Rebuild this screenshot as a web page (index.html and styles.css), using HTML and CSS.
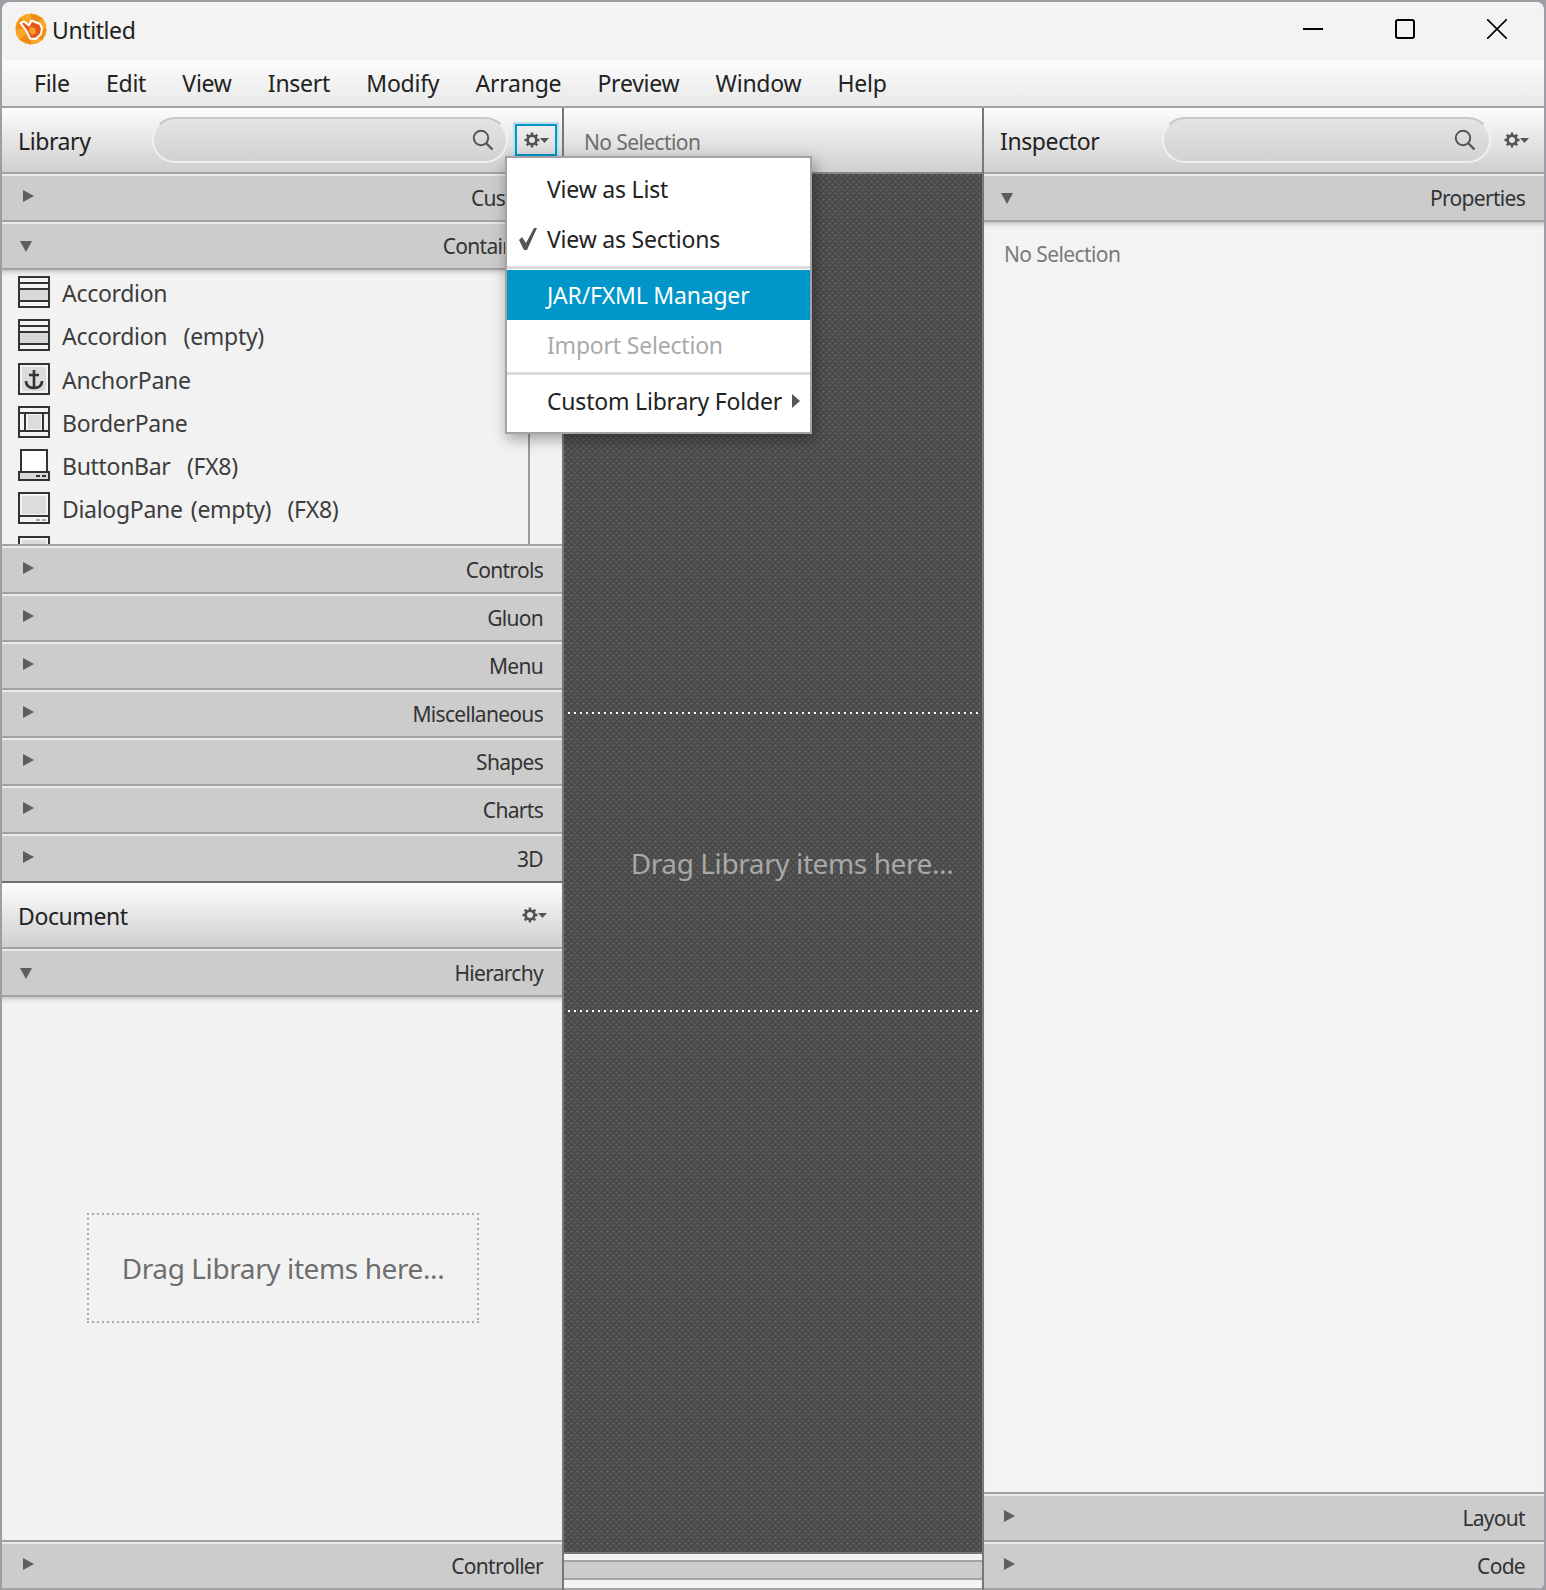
FILE: index.html
```html
<!DOCTYPE html>
<html lang="en">
<head>
<meta charset="utf-8">
<title>Untitled</title>
<link rel="stylesheet" href="styles.css">
</head>
<body>
<div class="window">
  <header class="titlebar">
    <svg class="logo" viewBox="0 0 32 32" aria-hidden="true">
      <path fill="#f9a825" d="M10 1.500 16 .5l6 1 5.500 3.500 3.500 6 .5 5-.5 5.500-3.500 5.500-5.500 3.500-6 1-6-1-5.500-3.500L1 21.500.5 16 1 10.500 4.500 5z"/>
      <path fill="#f08a16" d="M16 .5 27.500 5 16 16zM31.500 16 27 27.500 16 16zM16 31.500 4.500 27 16 16zM.5 16 5 4.500 16 16z"/>
      <path fill="#e9561a" stroke="#fff" stroke-width="2" stroke-linejoin="round" d="M5.500 10 9 8.500l5 4 2.500-5L25 11l2 4.500-1 5.500-5.500 5-5.500-.5-3.500-7.500z"/>
      <path fill="#f6a12a" d="M15 14l5 1 1 5-4 2-3-4z"/>
    </svg>
    <span class="title">Untitled</span>
    <div class="winctrls">
      <svg class="winbtn" viewBox="0 0 20 20"><path d="M0 10h20" stroke="#000" stroke-width="2" fill="none"/></svg>
      <svg class="winbtn" viewBox="0 0 20 20"><rect x="1" y="1" width="18" height="18" rx="2" stroke="#000" stroke-width="2" fill="none"/></svg>
      <svg class="winbtn" viewBox="0 0 20 20"><path d="M0 0l20 20M20 0L0 20" stroke="#000" stroke-width="1.600" fill="none"/></svg>
    </div>
  </header>
  <nav class="menubar">
    <span class="menuitem">File</span><span class="menuitem">Edit</span><span class="menuitem">View</span><span class="menuitem">Insert</span><span class="menuitem">Modify</span><span class="menuitem">Arrange</span><span class="menuitem">Preview</span><span class="menuitem">Window</span><span class="menuitem">Help</span>
  </nav>
  <main class="columns">
    <section class="col col-left">
      <div class="panelhead">
        <span class="panelname">Library</span>
        <div class="search search-lib"><svg class="searchicon" viewBox="0 0 22 22"><circle cx="9" cy="9" r="7.200" fill="none" stroke="#555" stroke-width="2"/><path d="M14 14l6.500 6.500" stroke="#555" stroke-width="2.400"/></svg></div>
        <div class="gearbtn gearbtn-focus">
          <svg class="gear" viewBox="0 0 25 16"><use href="#gearshape"/></svg>
        </div>
      </div>
      <div class="acc"><svg class="tri" viewBox="0 0 12 12"><path d="M0 0l11 6-11 6z"/></svg><span class="acclabel">Custom</span></div>
      <div class="acc"><svg class="tri tri-down" viewBox="0 0 12 12"><path d="M0 0h12l-6 11z"/></svg><span class="acclabel">Containers</span></div>
      <div class="libwrap">
        <ul class="liblist">
          <li class="librow"><svg class="ico" viewBox="0 0 32 32"><rect x="1" y="1" width="30" height="30" fill="#f3f3f3" stroke="#333" stroke-width="2"/><rect x="2" y="13" width="28" height="12" fill="#d8d8d8"/><path d="M1 7h30M1 13h30M1 25h30" stroke="#333" stroke-width="2"/></svg><span>Accordion</span></li>
          <li class="librow"><svg class="ico" viewBox="0 0 32 32"><rect x="1" y="1" width="30" height="30" fill="#f3f3f3" stroke="#333" stroke-width="2"/><rect x="2" y="13" width="28" height="12" fill="#d8d8d8"/><path d="M1 7h30M1 13h30M1 25h30" stroke="#333" stroke-width="2"/></svg><span>Accordion&nbsp; (empty)</span></li>
          <li class="librow"><svg class="ico" viewBox="0 0 32 32"><rect x="1" y="1" width="30" height="30" fill="#f3f3f3" stroke="#333" stroke-width="2"/><rect x="4" y="4" width="24" height="24" fill="#dcdcdc"/><path d="M16 7v18M11 12h10M8 18c0 5 4 7 8 7s8-2 8-7" fill="none" stroke="#333" stroke-width="2.600"/></svg><span>AnchorPane</span></li>
          <li class="librow"><svg class="ico" viewBox="0 0 32 32"><rect x="1" y="1" width="30" height="30" fill="#f3f3f3" stroke="#333" stroke-width="2"/><rect x="10" y="9" width="13" height="14" fill="#dcdcdc"/><path d="M1 7h30M1 25h30M7 7v18M25 7v18" stroke="#333" stroke-width="2"/></svg><span>BorderPane</span></li>
          <li class="librow"><svg class="ico" viewBox="0 0 32 32"><rect x="3" y="1" width="26" height="22" fill="#fff" stroke="#333" stroke-width="2"/><rect x="1" y="23" width="30" height="8" fill="#d8d8d8" stroke="#333" stroke-width="2"/><path d="M18 27h4M24 27h4" stroke="#333" stroke-width="2"/></svg><span>ButtonBar&nbsp; (FX8)</span></li>
          <li class="librow"><svg class="ico" viewBox="0 0 32 32"><rect x="1" y="1" width="30" height="30" fill="#f3f3f3" stroke="#333" stroke-width="2"/><rect x="4" y="4" width="24" height="18" fill="#dcdcdc"/><path d="M1 24h30" stroke="#333" stroke-width="2"/><path d="M18 28h4M24 28h4" stroke="#aaa" stroke-width="2"/></svg><span>DialogPane (empty)&nbsp; (FX8)</span></li>
          <li class="librow"><svg class="ico" viewBox="0 0 32 32"><rect x="1" y="1" width="30" height="30" fill="#f3f3f3" stroke="#333" stroke-width="2"/><rect x="4" y="4" width="24" height="18" fill="#dcdcdc"/></svg><span>DialogPane</span></li>
        </ul>
      </div>
      <div class="acc"><svg class="tri" viewBox="0 0 12 12"><path d="M0 0l11 6-11 6z"/></svg><span class="acclabel">Controls</span></div>
      <div class="acc"><svg class="tri" viewBox="0 0 12 12"><path d="M0 0l11 6-11 6z"/></svg><span class="acclabel">Gluon</span></div>
      <div class="acc"><svg class="tri" viewBox="0 0 12 12"><path d="M0 0l11 6-11 6z"/></svg><span class="acclabel">Menu</span></div>
      <div class="acc"><svg class="tri" viewBox="0 0 12 12"><path d="M0 0l11 6-11 6z"/></svg><span class="acclabel">Miscellaneous</span></div>
      <div class="acc"><svg class="tri" viewBox="0 0 12 12"><path d="M0 0l11 6-11 6z"/></svg><span class="acclabel">Shapes</span></div>
      <div class="acc"><svg class="tri" viewBox="0 0 12 12"><path d="M0 0l11 6-11 6z"/></svg><span class="acclabel">Charts</span></div>
      <div class="acc acc-last"><svg class="tri" viewBox="0 0 12 12"><path d="M0 0l11 6-11 6z"/></svg><span class="acclabel">3D</span></div>
      <div class="panelhead panelhead-doc">
        <span class="panelname">Document</span>
        <div class="gearbtn"><svg class="gear" viewBox="0 0 25 16"><use href="#gearshape"/></svg></div>
      </div>
      <div class="acc"><svg class="tri tri-down" viewBox="0 0 12 12"><path d="M0 0h12l-6 11z"/></svg><span class="acclabel">Hierarchy</span></div>
      <div class="docbody">
        <div class="dropbox">Drag Library items here...</div>
      </div>
      <div class="acc"><svg class="tri" viewBox="0 0 12 12"><path d="M0 0l11 6-11 6z"/></svg><span class="acclabel">Controller</span></div>
    </section>
    <section class="col col-center">
      <div class="crumb"><span class="crumbtext">No Selection</span></div>
      <div class="stage">
        <div class="stagedrop">Drag Library items here...</div>
      </div>
      <div class="msgbar"><div class="msgband"></div></div>
    </section>
    <section class="col col-right">
      <div class="panelhead">
        <span class="panelname">Inspector</span>
        <div class="search search-insp"><svg class="searchicon" viewBox="0 0 22 22"><circle cx="9" cy="9" r="7.200" fill="none" stroke="#555" stroke-width="2"/><path d="M14 14l6.500 6.500" stroke="#555" stroke-width="2.400"/></svg></div>
        <div class="gearbtn gearbtn-insp"><svg class="gear" viewBox="0 0 25 16"><use href="#gearshape"/></svg></div>
      </div>
      <div class="acc acc-r"><svg class="tri tri-down" viewBox="0 0 12 12"><path d="M0 0h12l-6 11z"/></svg><span class="acclabel">Properties</span></div>
      <div class="inspbody"><span class="nosel">No Selection</span></div>
      <div class="acc acc-r"><svg class="tri" viewBox="0 0 12 12"><path d="M0 0l11 6-11 6z"/></svg><span class="acclabel">Layout</span></div>
      <div class="acc acc-r"><svg class="tri" viewBox="0 0 12 12"><path d="M0 0l11 6-11 6z"/></svg><span class="acclabel">Code</span></div>
    </section>
  </main>
  <div class="popup">
    <div class="pitem">View as List</div>
    <div class="pitem"><svg class="check" viewBox="0 0 20 22"><path d="M1 12l3-3 4 6L16 0h3L9 22H6z"/></svg>View as Sections</div>
    <div class="psep"></div>
    <div class="pitem pitem-on">JAR/FXML Manager</div>
    <div class="pitem pitem-off">Import Selection</div>
    <div class="psep"></div>
    <div class="pitem">Custom Library Folder<svg class="subarrow" viewBox="0 0 8 14"><path d="M0 0l8 7-8 7z"/></svg></div>
  </div>
</div>
<svg class="defs" aria-hidden="true"><defs>
  <g id="gearshape">
    <circle cx="8" cy="8" r="4.400" fill="none" stroke="#555" stroke-width="2.800"/>
    <path d="M8 .5v3M8 12.500v3M.5 8h3M12.500 8h3M2.700 2.700l2.100 2.100M11.200 11.200l2.100 2.100M13.300 2.700l-2.100 2.100M4.800 11.200l-2.100 2.100" stroke="#555" stroke-width="2.400" fill="none"/>
    <path fill="#555" d="M16 6h9l-4.500 5z"/>
  </g>
</defs></svg>
</body>
</html>
```
FILE: styles.css
```css
* { box-sizing: border-box; }
html, body { margin: 0; padding: 0; }
body {
  width: 1546px;
  height: 1590px;
  background: #9d9da3;
  padding: 2px 2px 0;
  font-family: "Noto Sans", sans-serif;
  color: #333;
  overflow: hidden;
}
.defs { width: 0; height: 0; position: absolute; }
.window {
  position: relative;
  width: 1542px;
  height: 1588px;
  display: flex;
  flex-direction: column;
  background: #f3f3f3;
  border-radius: 8px 8px 8px 0;
  overflow: hidden;
}
.titlebar {
  height: 58px;
  flex: none;
  display: flex;
  align-items: center;
  padding-left: 13px;
  background: #f3f3f3;
}
.logo { width: 32px; height: 32px; flex: none; margin-top: -4px; }
.title { margin: -2px 0 0 5px; font-size: 23px; letter-spacing: -0.4px; color: #222; }
.winctrls { margin: -4px 0 0 auto; display: flex; gap: 72px; padding-right: 37px; }
.winbtn { width: 20px; height: 20px; display: block; }
.menubar {
  height: 48px;
  flex: none;
  display: flex;
  align-items: center;
  gap: 36.200px;
  padding-left: 32px;
  background: linear-gradient(#fbfbfb, #e9e9e9);
  border-bottom: 2px solid #a3a3a3;
  font-size: 23px;
  letter-spacing: -0.25px;
  color: #222;
}
.columns { flex: 1; min-height: 0; display: flex; }
.col { display: flex; flex-direction: column; min-height: 0; }
.col-left { width: 562px; flex: none; border-right: 2px solid #777; }
.col-center { width: 420px; flex: none; border-right: 2px solid #777; }
.col-right { flex: 1; min-width: 0; }

.panelhead {
  height: 66px;
  flex: none;
  display: flex;
  align-items: center;
  background: linear-gradient(#fdfdfd, #cfcfcf);
  border-bottom: 2px solid #a3a3a3;
  padding-left: 16px;
}
.panelname { font-size: 23px; letter-spacing: -0.4px; color: #222; margin-top: 2px; }
.search {
  height: 46px;
  margin-left: auto;
  border: 2px solid #f0f0f0;
  border-top-color: #c8c8c8;
  border-radius: 23px;
  background: linear-gradient(#e4e4e4, #d2d2d2);
  display: flex;
  align-items: center;
  justify-content: flex-end;
}
.search-lib { width: 356px; padding-right: 12px; }
.search-insp { width: 329px; padding-right: 13px; }
.searchicon { width: 22px; height: 22px; display: block; }
.gearbtn {
  width: 42px;
  height: 32px;
  margin: 0 5px 0 7px;
  flex: none;
  display: flex;
  align-items: center;
  justify-content: center;
}
.gearbtn-focus { border: 2px solid #0096c9; box-shadow: 0 0 0 2px #bfe0ec; }
.panelhead-doc .gearbtn { margin: 0 7px 0 auto; }
.gearbtn-insp { margin: 0 7px 0 4px; }
.gear { width: 25px; height: 16px; display: block; }

.acc {
  height: 48px;
  flex: none;
  display: flex;
  align-items: center;
  justify-content: space-between;
  background: #cccccc;
  border-top: 2px solid #e8e8e8;
  border-bottom: 2px solid #a3a3a3;
  padding: 0 19px 0 21px;
  font-size: 21px;
  color: #333;
}
.acc-last { height: 49px; border-bottom-color: #6e6e6e; }
.acc-r { padding: 0 19px 0 20px; }
.tri { width: 12px; height: 12px; fill: #5e5e5e; flex: none; margin-top: -4px; }
.tri-down { margin: 2px 0 0 -3px; }
.acclabel { letter-spacing: -0.7px; }

.libwrap { height: 276px; flex: none; overflow: hidden; border-bottom: 2px solid #a3a3a3; background: #f2f2f2; box-shadow: inset 0 6px 6px -6px #999; }
.liblist { list-style: none; margin: 0; padding: 6px 0 0 16px; width: 528px; height: 100%; border-right: 2px solid #9a9a9a; }
.librow { height: 43.300px; display: flex; align-items: flex-start; gap: 12px; font-size: 23px; letter-spacing: -0.3px; word-spacing: 2.500px; color: #3d3d3d; }
.ico { width: 32px; height: 32px; flex: none; display: block; }
.librow span { line-height: 32px; margin-top: 1px; }

.docbody { flex: 1; min-height: 0; display: flex; align-items: flex-start; background: #f2f2f2; box-shadow: inset 0 6px 6px -6px #999; border-bottom: 2px solid #a3a3a3; padding: 216px 0 0 85px; }
.dropbox {
  width: 392px;
  height: 110px;
  background-image:
    linear-gradient(90deg, #aaa 2px, transparent 2px),
    linear-gradient(90deg, #aaa 2px, transparent 2px),
    linear-gradient(#aaa 2px, transparent 2px),
    linear-gradient(#aaa 2px, transparent 2px);
  background-size: 5px 2px, 5px 2px, 2px 5px, 2px 5px;
  background-position: 0 0, 0 100%, 0 0, 100% 0;
  background-repeat: repeat-x, repeat-x, repeat-y, repeat-y;
  display: flex;
  align-items: center;
  justify-content: center;
  font-size: 28px;
  letter-spacing: -0.4px;
  color: #6e6e6e;
}

.crumb {
  height: 66px;
  flex: none;
  display: flex;
  align-items: center;
  padding-left: 20px;
  background: linear-gradient(#fdfdfd, #cfcfcf);
  border-bottom: 2px solid #888;
}
.crumbtext { font-size: 21px; letter-spacing: -0.6px; color: #6e6e6e; margin-top: 4px; }
.stage {
  flex: 1;
  min-height: 0;
  padding-top: 538px;
  background-color: #4a4a4a;
  background-image: radial-gradient(circle at 1.500px 1.500px, #5e5e5e 1px, transparent 1.500px), radial-gradient(circle at 4.500px 4.500px, #585858 1px, transparent 1.500px);
  background-size: 6px 6px;
}
.stagedrop {
  height: 300px;
  margin: 0 2px 0 4px;
  padding: 2px 0 0 36px;
  background-image: linear-gradient(90deg, #fff 2px, transparent 2px), linear-gradient(90deg, #fff 2px, transparent 2px);
  background-size: 6px 2px, 6px 2px;
  background-position: 0 0, 0 100%;
  background-repeat: repeat-x, repeat-x;
  display: flex;
  align-items: center;
  justify-content: center;
  font-size: 28px;
  letter-spacing: -0.4px;
  color: #a8a8a8;
}
.msgbar {
  height: 38px;
  flex: none;
  border-top: 2px solid #777;
  border-bottom: 2px solid #a3a3a3;
  padding-top: 6px;
  background: #f3f3f3;
}
.msgband { height: 20px; background: #ccc; border-top: 2px solid #a3a3a3; border-bottom: 2px solid #a3a3a3; }

.inspbody { flex: 1; min-height: 0; padding: 18px 0 0 20px; background: #f3f3f3; box-shadow: inset 0 6px 6px -6px #999; border-bottom: 2px solid #a3a3a3; }
.nosel { font-size: 21px; letter-spacing: -0.6px; color: #7a7a7a; }

.popup {
  position: absolute;
  left: 503px;
  top: 154px;
  width: 307px;
  height: 278px;
  background: #fff;
  border: 2px solid #a3a3a3;
  padding-top: 6px;
  box-shadow: 2px 5px 14px rgba(0,0,0,.35);
  font-size: 23px;
  letter-spacing: -0.2px;
  color: #222;
}
.pitem { position: relative; height: 50px; display: flex; align-items: center; padding-left: 40px; }
.psep { height: 4px; margin-top: 2px; border-top: 3px solid #dcdcdc; }
.pitem-on { background: #0096c9; color: #fff; }
.pitem-off { color: #aaa; }
.check { position: absolute; left: 11px; top: 14px; width: 20px; height: 22px; fill: #555; }
.subarrow { position: absolute; right: 10px; top: 18px; width: 8px; height: 14px; fill: #555; }
```
